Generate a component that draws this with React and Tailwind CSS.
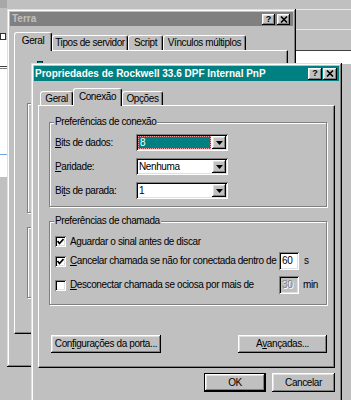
import React from 'react';

const frame = 'shadow-[inset_-1px_-1px_0_#000,inset_1px_1px_0_#dfdfdf,inset_-2px_-2px_0_#808080,inset_2px_2px_0_#fff]';
const bevel = 'shadow-[inset_-1px_-1px_0_#000,inset_1px_1px_0_#fff,inset_-2px_-2px_0_#808080,inset_2px_2px_0_#dfdfdf]';
const sunken = 'shadow-[inset_1px_1px_0_#808080,inset_-1px_-1px_0_#fff,inset_2px_2px_0_#000,inset_-2px_-2px_0_#dfdfdf]';
const etched = 'border border-[#808080] shadow-[inset_1px_1px_0_#fff,1px_1px_0_#fff]';

const TitleButton = ({ kind, size }) => (
  <div className={`${size} bg-[#c0c0c0] ${bevel} flex items-center justify-center`}>
    {kind === 'help' ? (
      <span className="font-bold text-[9px] leading-none tracking-normal">?</span>
    ) : (
      <svg width="8" height="7" viewBox="0 0 8 7">
        <path d="M1 0.5 L7 6.5 M7 0.5 L1 6.5" stroke="#000" strokeWidth="1.6" />
      </svg>
    )}
  </div>
);

const Tab = ({ children, className, active }) => (
  <div
    className={`${className} relative flex items-center justify-center bg-[#c0c0c0] border-t border-l border-r border-t-white border-l-white border-r-black rounded-t-[3px] shadow-[inset_-1px_0_0_#808080] ${active ? 'z-10 -mb-[1px] pb-[2px]' : ''}`}
  >
    {children}
  </div>
);

const Key = ({ children }) => <span className="underline underline-offset-1">{children}</span>;

const Btn = ({ children, className }) => (
  <div className={`${className} bg-[#c0c0c0] ${bevel} flex items-center justify-center`}>{children}</div>
);

const ComboRow = ({ label, value, focused }) => (
  <div className="flex items-center h-[17px]">
    <div className="w-[81px]">{label}</div>
    <div className={`w-[92px] h-[17px] bg-white ${sunken} flex p-[2px]`}>
      {focused ? (
        <div className="flex-1 flex items-center pl-[1px] mr-[1px] bg-[#008080] text-white border border-dotted border-[#f0a0a0]">
          {value}
        </div>
      ) : (
        <div className="flex-1 flex items-center pl-[1px]">{value}</div>
      )}
      <div className={`w-[14px] h-full bg-[#c0c0c0] ${bevel} flex items-center justify-center`}>
        <svg width="7" height="4" viewBox="0 0 7 4">
          <path d="M0 0h7L3.5 4z" fill="#000" />
        </svg>
      </div>
    </div>
  </div>
);

const Check = ({ checked }) => (
  <div className={`w-[11px] h-[11px] shrink-0 bg-white ${sunken} flex items-center justify-center`}>
    {checked && (
      <svg width="7" height="7" viewBox="0 0 7 7">
        <path d="M0.5 3 L2.5 5.5 L6.5 1" fill="none" stroke="#000" strokeWidth="1.7" />
      </svg>
    )}
  </div>
);

const Desktop = () => (
  <div className="flex h-full">
    <div className="w-[7px] flex flex-col">
      <div className="h-[8px] bg-[#a8a8a8]" />
      <div className="h-[24px]" />
      <div className="h-[8px] flex items-center">
        <div className="w-[6px] h-[7px] border border-[#303030] bg-white" />
      </div>
      <div className="h-[137px] bg-white flex flex-col">
        <div className="h-[26px]" />
        <div className="h-[1px] bg-[#404040]" />
        <div className="h-[1px]" />
        <div className="h-[1px] bg-[#808080]" />
        <div className="flex-1" />
        <div className="h-[1px] bg-[#6fa8dc]" />
        <div className="h-[22px]" />
      </div>
    </div>
    <div className="flex-1" />
    <div className="w-[55px] flex flex-col">
      <div className="h-[9px]" />
      <div className="h-[1px] bg-[#e8e8e8]" />
      <div className="h-[19px]" />
      <div className="h-[1px] bg-[#e8e8e8]" />
      <div className="h-[20px]" />
      <div className="h-[1px] bg-[#404040]" />
      <div className="h-[13px] bg-white" />
      <div className="flex-1" />
    </div>
  </div>
);

const TerraWindow = () => (
  <div className={`absolute left-[7px] top-[9px] w-[289px] h-[358px] bg-[#c0c0c0] p-[3px] flex flex-col ${frame}`}>
    <div className="h-[14px] bg-[#808080] flex items-center justify-between pl-[2px] pr-[3px]">
      <span className="font-bold text-[#c0c0c0] tracking-normal">Terra</span>
      <div className="flex gap-[2px]">
        <TitleButton kind="help" size="w-[13px] h-[11px]" />
        <TitleButton size="w-[13px] h-[11px]" />
      </div>
    </div>
    <div className="mt-[6px] ml-[4px] mr-[5px] flex flex-col">
      <div className="flex items-end">
        <Tab className="w-[38px] h-[19px]" active>Geral</Tab>
        <Tab className="w-[76px] h-[15px]">Tipos de servidor</Tab>
        <Tab className="w-[35px] h-[15px]">Script</Tab>
        <Tab className="w-[83px] h-[15px]">Vínculos múltiplos</Tab>
      </div>
      <div className="h-[284px] border border-t-white border-l-white border-r-black border-b-black shadow-[inset_-1px_-1px_0_#808080] flex flex-col pl-[12px]">
        <div className="mt-[9px] ml-[10px] flex items-center gap-[3px] h-[7px]">
          <div className="w-[6px] h-[6px] border border-[#202020] bg-[#008080]" />
          <div className="w-[3px] h-[1px] bg-[#404040]" />
        </div>
        <div className={`mt-[36px] w-[240px] h-[110px] ${etched}`} />
        <div className={`mt-[14px] w-[240px] h-[71px] ${etched}`} />
      </div>
    </div>
  </div>
);

const ModemWindow = () => (
  <div className={`absolute left-[31px] top-[63px] w-[311px] h-[345px] bg-[#c0c0c0] p-[3px] flex flex-col ${frame}`}>
    <div className="h-[15px] bg-[#008080] flex items-center justify-between pl-[1px] pr-[2px]">
      <span className="font-bold text-white tracking-normal">Propriedades de Rockwell 33.6 DPF Internal PnP</span>
      <div className="flex gap-[1px]">
        <TitleButton kind="help" size="w-[14px] h-[12px]" />
        <TitleButton size="w-[14px] h-[12px]" />
      </div>
    </div>
    <div className="mt-[7px] mx-[4px] flex flex-col">
      <div className="flex items-end pl-[2px]">
        <Tab className="w-[33px] h-[14px]">Geral</Tab>
        <Tab className="w-[49px] h-[18px]" active>Conexão</Tab>
        <Tab className="w-[41px] h-[14px]">Opções</Tab>
      </div>
      <div className="h-[263px] border border-t-white border-l-white border-r-black border-b-black shadow-[inset_-1px_-1px_0_#808080] flex flex-col">
        <fieldset className={`mt-[10px] ml-[10px] mr-[7px] ${etched}`}>
          <legend className="ml-[4px] px-[1px] bg-[#c0c0c0]">Preferências de conexão</legend>
          <div className="pl-[5px] pt-[6px] pb-[7px] flex flex-col gap-[7px]">
            <ComboRow label={<><Key>B</Key>its de dados:</>} value="8" focused />
            <ComboRow label={<><Key>P</Key>aridade:</>} value="Nenhuma" />
            <ComboRow label={<>Bi<Key>t</Key>s de parada:</>} value="1" />
          </div>
        </fieldset>
        <fieldset className={`mt-[8px] ml-[10px] mr-[7px] ${etched}`}>
          <legend className="ml-[4px] px-[1px] bg-[#c0c0c0]">Preferências de chamada</legend>
          <div className="pl-[5px] pt-[8px] pb-[10px] flex flex-col">
            <div className="h-[13px] flex items-center gap-[4px]">
              <Check checked />
              <span>A<Key>g</Key>uardar o sinal antes de discar</span>
            </div>
            <div className="mt-[4px] h-[18px] flex items-center">
              <div className="flex-1 flex items-center gap-[4px]">
                <Check checked />
                <span><Key>C</Key>ancelar chamada se não for conectada dentro de</span>
              </div>
              <div className={`w-[20px] h-[18px] bg-white ${sunken} flex items-center pl-[3px]`}>60</div>
              <div className="w-[27px] pl-[5px]">s</div>
            </div>
            <div className="mt-[6px] h-[18px] flex items-center">
              <div className="flex-1 flex items-center gap-[4px]">
                <Check />
                <span><Key>D</Key>esconectar chamada se ociosa por mais de</span>
              </div>
              <div className={`w-[20px] h-[18px] bg-[#c0c0c0] ${sunken} flex items-center pl-[3px] text-[#808080] [text-shadow:1px_1px_0_#fff]`}>30</div>
              <div className="w-[27px] pl-[4px]">min</div>
            </div>
          </div>
        </fieldset>
        <div className="mt-[30px] ml-[12px] mr-[7px] flex justify-between">
          <Btn className="w-[110px] h-[18px]">Con<Key>f</Key>igurações da porta...</Btn>
          <Btn className="w-[89px] h-[18px]">A<Key>v</Key>ançadas...</Btn>
        </div>
      </div>
      <div className="mt-[5px] flex justify-end gap-[6px]">
        <Btn className="w-[62px] h-[19px] border border-black">OK</Btn>
        <Btn className="w-[63px] h-[19px]">Cancelar</Btn>
      </div>
    </div>
  </div>
);

export default function App() {
  return (
    <div className="relative w-[351px] h-[400px] overflow-hidden bg-[#c0c0c0] text-black text-[10px] leading-[12px] tracking-[-0.4px] font-['Liberation_Sans',Arial,sans-serif]">
      <Desktop />
      <TerraWindow />
      <ModemWindow />
    </div>
  );
}
